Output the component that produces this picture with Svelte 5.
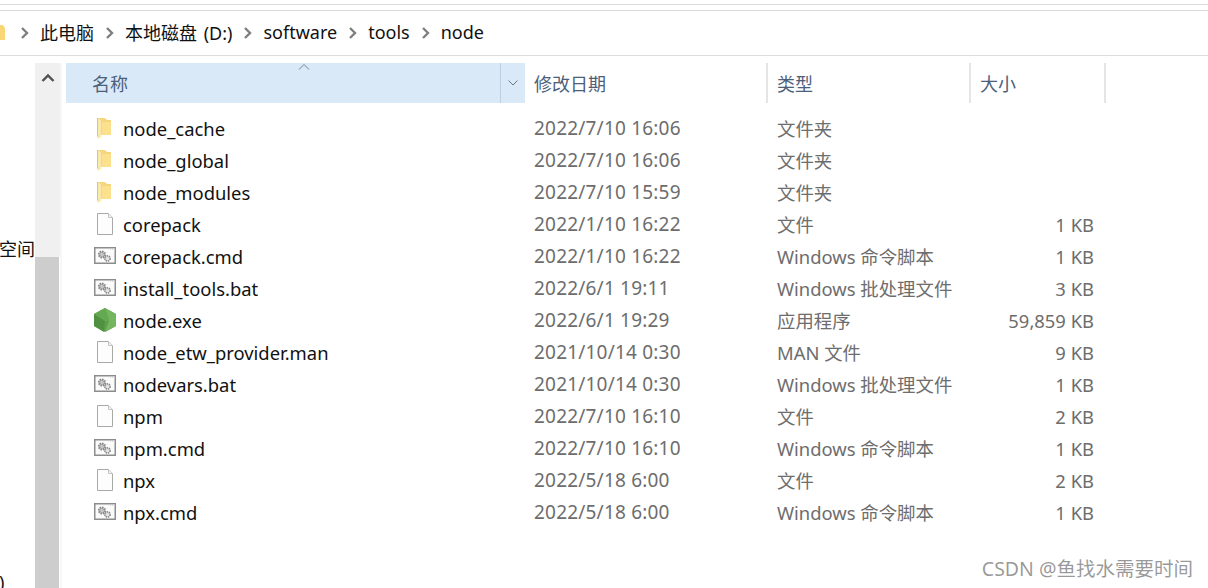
<script>
	const crumbs = ['此电脑', '本地磁盘 (D:)', 'software', 'tools', 'node'];
	const files = [
		{ name: 'node_cache', date: '2022/7/10 16:06', type: '文件夹', size: '', icon: 'folder' },
		{ name: 'node_global', date: '2022/7/10 16:06', type: '文件夹', size: '', icon: 'folder' },
		{ name: 'node_modules', date: '2022/7/10 15:59', type: '文件夹', size: '', icon: 'folder' },
		{ name: 'corepack', date: '2022/1/10 16:22', type: '文件', size: '1 KB', icon: 'file' },
		{ name: 'corepack.cmd', date: '2022/1/10 16:22', type: 'Windows 命令脚本', size: '1 KB', icon: 'cmd' },
		{ name: 'install_tools.bat', date: '2022/6/1 19:11', type: 'Windows 批处理文件', size: '3 KB', icon: 'cmd' },
		{ name: 'node.exe', date: '2022/6/1 19:29', type: '应用程序', size: '59,859 KB', icon: 'node' },
		{ name: 'node_etw_provider.man', date: '2021/10/14 0:30', type: 'MAN 文件', size: '9 KB', icon: 'file' },
		{ name: 'nodevars.bat', date: '2021/10/14 0:30', type: 'Windows 批处理文件', size: '1 KB', icon: 'cmd' },
		{ name: 'npm', date: '2022/7/10 16:10', type: '文件', size: '2 KB', icon: 'file' },
		{ name: 'npm.cmd', date: '2022/7/10 16:10', type: 'Windows 命令脚本', size: '1 KB', icon: 'cmd' },
		{ name: 'npx', date: '2022/5/18 6:00', type: '文件', size: '2 KB', icon: 'file' },
		{ name: 'npx.cmd', date: '2022/5/18 6:00', type: 'Windows 命令脚本', size: '1 KB', icon: 'cmd' }
	];
</script>

<div class="window">
	<div class="topstrip"></div>
	<div class="addressbar">
		<svg class="crumb-folder" width="6" height="18" viewBox="0 0 6 18">
			<path d="M0 1h3l2 3v12H0z" fill="#f9d678" />
		</svg>
		{#each crumbs as crumb}
			<svg class="chevron" width="9" height="12" viewBox="0 0 9 12">
				<path d="M2 1l5 5-5 5" fill="none" stroke="#7f7f7f" stroke-width="2.400" />
			</svg>
			<span class="crumb">{crumb}</span>
		{/each}
	</div>

	<div class="main">
		<div class="sidebar">
			<div class="nav">
				<span class="nav-label first">空间</span>
				<span class="nav-label last">)</span>
			</div>
			<div class="scrollbar">
				<div class="scroll-track">
					<svg width="14" height="10" viewBox="0 0 14 10">
						<path d="M1.500 8l5.500-5.500 5.500 5.500" fill="none" stroke="#505050" stroke-width="2.400" />
					</svg>
				</div>
				<div class="scroll-thumb"></div>
			</div>
		</div>

		<div class="list">
			<div class="header">
				<div class="col-head name-head">
					<span>名称</span>
					<svg class="sort" width="12" height="7" viewBox="0 0 12 7">
						<path d="M1 6.500l5-5 5 5" fill="none" stroke="#7d858d" stroke-width="1" />
					</svg>
					<div class="dropdown">
						<svg width="10" height="6" viewBox="0 0 10 6">
							<path d="M.5 .5l4.500 4.500 4.500-4.500" fill="none" stroke="#6d7680" stroke-width="1" />
						</svg>
					</div>
				</div>
				<div class="col-head date-col">修改日期</div>
				<div class="col-head type-col">类型</div>
				<div class="col-head size-col">大小</div>
			</div>

			<div class="rows">
				{#each files as file}
					<div class="row">
						<div class="name-cell">
							<span class="icon">
								{#if file.icon === 'folder'}
									<svg width="24" height="24" viewBox="0 0 24 24">
										<path d="M4 2h8l2 2h4v15H8z" fill="#f6d67c" />
										<path d="M9 6h9v13H9z" fill="#fbe08e" />
										<path d="M4 2l4 2v17l-3 2-1-3z" fill="#fae9ad" />
										<path d="M4 2l1 .5V21l-1-1z" fill="#e5c468" />
									</svg>
								{:else if file.icon === 'file'}
									<svg width="24" height="24" viewBox="0 0 24 24">
										<path d="M4.500 1.500h11l4 4v17h-15z" fill="#fdfdfd" stroke="#a9a9a9" />
										<path d="M15.500 1.500v4h4" fill="#f3f3f3" stroke="#c4c4c4" />
									</svg>
								{:else if file.icon === 'cmd'}
									<svg width="24" height="24" viewBox="0 0 24 24">
										<rect x="1.750" y="3.750" width="20.500" height="15.500" fill="#fbfbfb" stroke="#8c8c8c" stroke-width="1.500" />
										<path d="M17 5h1M19 5h1M21 5h1" stroke="#d0d0d0" stroke-width="1.500" />
										<circle cx="9" cy="10.500" r="3" fill="#c6c6c6" stroke="#8a8a8a" stroke-width="2.200" stroke-dasharray="1.500 .8" />
										<circle cx="14.500" cy="14.500" r="2.600" fill="#e4e4e4" stroke="#8a8a8a" stroke-width="1.600" stroke-dasharray="1.500 .7" />
									</svg>
								{:else}
									<svg width="24" height="24" viewBox="0 0 24 24">
										<path d="M12 0l11 6v12l-11 6-11-6V6z" fill="#5fa04e" />
										<path d="M12 0l11 6v12l-11 6 4-11z" fill="#74b560" />
										<path d="M1 6l11 7-1 11-10-6z" fill="#4f9140" />
										<path d="M12 0L1 6l11 7 4 0z" fill="#62a952" />
									</svg>
								{/if}
							</span>
							<span class="filename">{file.name}</span>
						</div>
						<div class="date-col cell">{file.date}</div>
						<div class="type-col cell">{file.type}</div>
						<div class="size-col cell">{file.size}</div>
					</div>
				{/each}
			</div>
		</div>
	</div>

	<div class="watermark">CSDN @鱼找水需要时间</div>
</div>

<style>
	:global(body) {
		margin: 0;
		background: #fff;
	}

	.window {
		position: relative;
		width: 1208px;
		height: 588px;
		overflow: hidden;
		font-family: 'Noto Sans', 'Noto Sans CJK SC', sans-serif;
		font-size: 18.4px;
		color: #111;
	}

	.topstrip {
		height: 4px;
		border-bottom: 1px solid #dcdcdc;
		margin-bottom: 5px;
	}

	.addressbar {
		display: flex;
		align-items: center;
		height: 44px;
		border-top: 1px solid #dcdcdc;
		border-bottom: 1px solid #dcdcdc;
	}

	.crumb-folder {
		margin-right: 14px;
	}

	.chevron {
		margin-right: 11px;
	}

	.crumb {
		margin-right: 11px;
		font-size: 18px;
		word-spacing: 2px;
		white-space: nowrap;
		position: relative;
		top: -1px;
	}

	.main {
		display: flex;
		padding-top: 7px;
		height: 525px;
	}

	.sidebar {
		display: flex;
		width: 60px;
		flex-shrink: 0;
	}

	.nav {
		position: relative;
		width: 35px;
		overflow: hidden;
	}

	.nav-label {
		position: absolute;
		left: 0;
		font-size: 18px;
	}

	.nav-label.first {
		top: 172px;
		left: -1px;
	}

	.nav-label.last {
		bottom: -6px;
		left: -1px;
	}

	.scrollbar {
		display: flex;
		flex-direction: column;
		width: 25px;
	}

	.scroll-track {
		height: 194px;
		background: #f0f0f0;
		display: flex;
		justify-content: center;
		padding-top: 10px;
		box-sizing: border-box;
	}

	.scroll-thumb {
		flex: 1;
		background: #cdcdcd;
		margin-right: 1px;
	}

	.list {
		flex: 1;
		border-left: 2px solid #f7f7f7;
		padding-left: 4px;
	}

	.header {
		display: flex;
		height: 40px;
		color: #4c607a;
	}

	.col-head {
		display: flex;
		align-items: center;
		box-sizing: border-box;
		font-size: 18px;
	}

	.name-head {
		position: relative;
		width: 459px;
		padding-left: 26px;
		background: #d9e9f7;
	}

	.sort {
		position: absolute;
		left: 232px;
		top: 0;
	}

	.dropdown {
		position: absolute;
		right: 0;
		top: 0;
		bottom: 0;
		width: 24px;
		display: flex;
		align-items: center;
		justify-content: center;
		border-left: 1px solid #bcd0e2;
	}

	.date-col {
		width: 243px;
		padding-left: 9px;
		box-sizing: border-box;
	}

	.type-col {
		width: 203px;
		padding-left: 9px;
		box-sizing: border-box;
	}

	.size-col {
		width: 135px;
		padding-left: 9px;
		box-sizing: border-box;
	}

	.col-head.date-col,
	.col-head.type-col,
	.col-head.size-col {
		border-right: 2px solid #e5e5e5;
	}

	.rows {
		padding-top: 9px;
	}

	.row {
		display: flex;
		align-items: center;
		height: 32px;
	}

	.name-cell {
		display: flex;
		align-items: center;
		width: 459px;
		padding-left: 27px;
		box-sizing: border-box;
	}

	.icon {
		display: flex;
		width: 24px;
		height: 24px;
		margin-right: 6px;
	}

	.filename {
		white-space: nowrap;
	}

	.cell {
		color: #6d6d6d;
		white-space: nowrap;
	}

	.row .date-col {
		font-size: 19px;
		letter-spacing: 0.2px;
	}

	.row .size-col {
		padding-left: 0;
		padding-right: 1px;
		text-align: right;
		width: 124px;
	}

	.watermark {
		position: absolute;
		right: 15px;
		bottom: 6px;
		font-size: 19.5px;
		color: rgba(120, 120, 120, 0.75);
		white-space: nowrap;
	}
</style>
